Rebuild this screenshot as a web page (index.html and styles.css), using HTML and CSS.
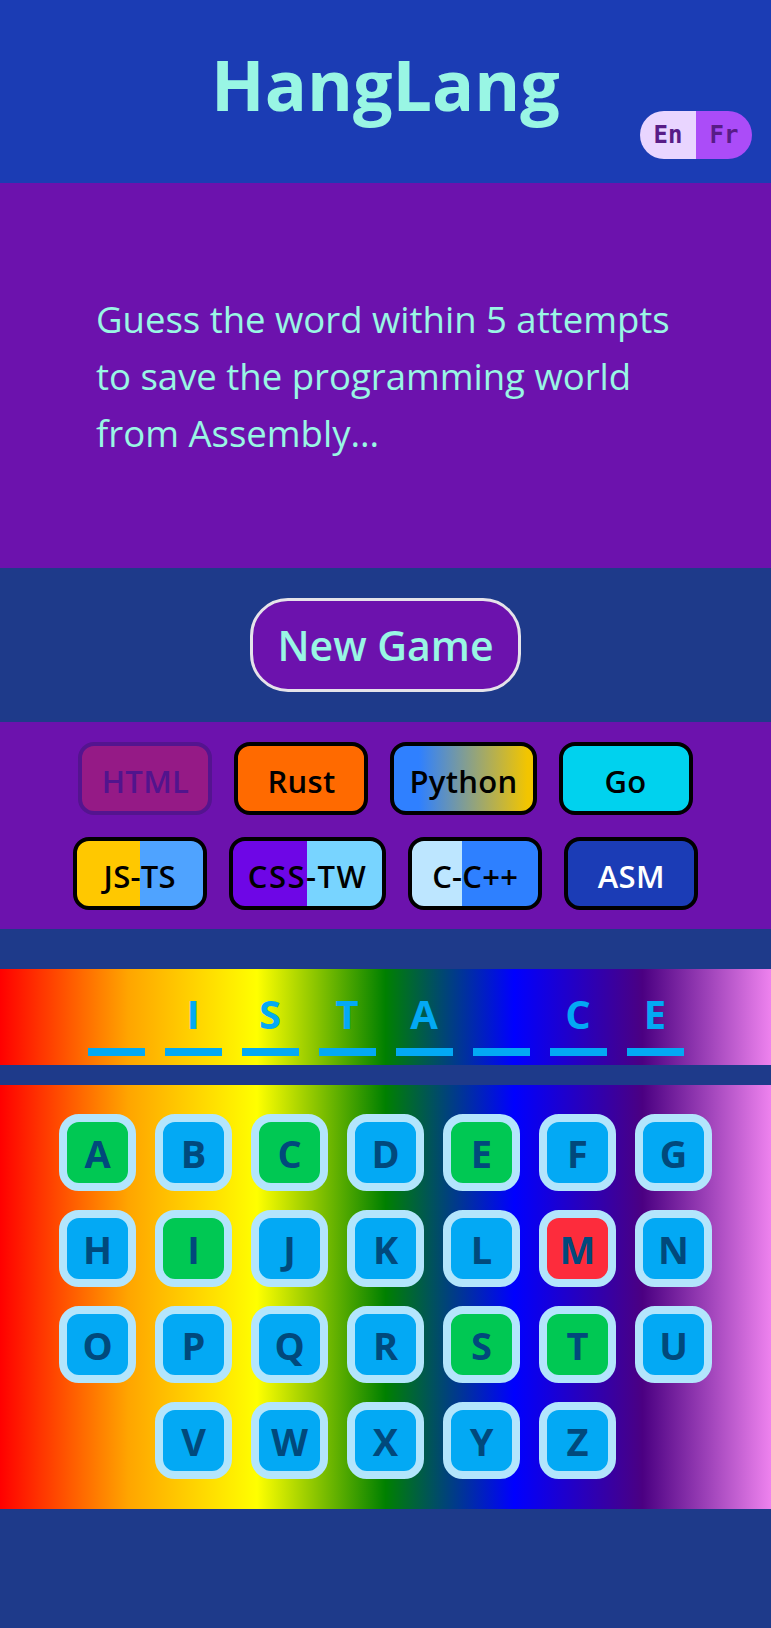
FILE: index.html
```html
<!DOCTYPE html>
<html lang="en">
<head>
<meta charset="utf-8">
<title>HangLang</title>
<link rel="stylesheet" href="styles.css">
</head>
<body>
  <header class="header">
    <h1 class="title">HangLang</h1>
    <div class="lang-toggle">
      <button class="lang-opt lang-en">En</button>
      <button class="lang-opt lang-fr">Fr</button>
    </div>
  </header>

  <section class="intro">
    <p class="intro-text">Guess the word within 5 attempts to save the programming world from Assembly...</p>
  </section>

  <section class="actions">
    <button class="new-game">New Game</button>
  </section>

  <section class="languages">
    <div class="lang-list">
      <button class="lang-btn html">HTML</button>
      <button class="lang-btn rust">Rust</button>
      <button class="lang-btn python">Python</button>
      <button class="lang-btn go">Go</button>
      <button class="lang-btn jsts">JS-TS</button>
      <button class="lang-btn csstw">CSS-TW</button>
      <button class="lang-btn ccpp">C-C++</button>
      <button class="lang-btn asm">ASM</button>
    </div>
  </section>

  <section class="word">
    <div class="slot"><span class="slot-letter"></span><span class="slot-line"></span></div>
    <div class="slot"><span class="slot-letter">I</span><span class="slot-line"></span></div>
    <div class="slot"><span class="slot-letter">S</span><span class="slot-line"></span></div>
    <div class="slot"><span class="slot-letter">T</span><span class="slot-line"></span></div>
    <div class="slot"><span class="slot-letter">A</span><span class="slot-line"></span></div>
    <div class="slot"><span class="slot-letter"></span><span class="slot-line"></span></div>
    <div class="slot"><span class="slot-letter">C</span><span class="slot-line"></span></div>
    <div class="slot"><span class="slot-letter">E</span><span class="slot-line"></span></div>
  </section>

  <section class="keyboard">
    <div class="keys">
      <button class="key hit">A</button>
      <button class="key">B</button>
      <button class="key hit">C</button>
      <button class="key">D</button>
      <button class="key hit">E</button>
      <button class="key">F</button>
      <button class="key">G</button>
      <button class="key">H</button>
      <button class="key hit">I</button>
      <button class="key">J</button>
      <button class="key">K</button>
      <button class="key">L</button>
      <button class="key miss">M</button>
      <button class="key">N</button>
      <button class="key">O</button>
      <button class="key">P</button>
      <button class="key">Q</button>
      <button class="key">R</button>
      <button class="key hit">S</button>
      <button class="key hit">T</button>
      <button class="key">U</button>
      <button class="key">V</button>
      <button class="key">W</button>
      <button class="key">X</button>
      <button class="key">Y</button>
      <button class="key">Z</button>
    </div>
  </section>
</body>
</html>
```

FILE: styles.css
```css
* {
  box-sizing: border-box;
}

html, body {
  margin: 0;
  padding: 0;
}

body {
  background: #1e3a8a;
  font-family: "Open Sans", "Noto Sans", sans-serif;
  min-height: 1628px;
}

button {
  font-family: inherit;
  cursor: pointer;
}

/* Header */
.header {
  position: relative;
  height: 183px;
  background: #1b3cb4;
  padding-top: 37px;
  text-align: center;
}

.title {
  margin: 0;
  font-size: 70px;
  font-weight: 700;
  line-height: 1.362;
  color: #99f6e4;
}

.lang-toggle {
  position: absolute;
  top: 111px;
  right: 19px;
  display: flex;
  width: 112px;
  height: 48px;
  border-radius: 24px;
  overflow: hidden;
}

.lang-opt {
  flex: 1;
  border: 0;
  margin: 0;
  padding: 0;
  font-family: "DejaVu Sans Mono", monospace;
  font-weight: 700;
  font-size: 24px;
  color: #581c87;
}

.lang-en {
  background: #e9d5ff;
}

.lang-fr {
  background: #ab4cf8;
}

/* Intro */
.intro {
  height: 385px;
  background: #6c12ad;
  padding: 108px 90px 0 96px;
}

.intro-text {
  margin: 0;
  font-size: 36.5px;
  line-height: 57px;
  color: #99f6e4;
}

/* New game */
.actions {
  display: flex;
  justify-content: center;
  padding: 30px 0;
}

.new-game {
  height: 94px;
  padding: 0 24px;
  border: 3px solid #e5e3ea;
  border-radius: 38px;
  background: #6c12ad;
  color: #99f6e4;
  font-size: 41px;
  font-weight: 600;
}

/* Languages */
.languages {
  background: #6c12ad;
  padding: 20px 0 19px;
}

.lang-list {
  max-width: 660px;
  margin: 0 auto;
  display: flex;
  flex-wrap: wrap;
  justify-content: center;
  gap: 22px;
}

.lang-btn {
  min-width: 134px;
  height: 73px;
  padding: 4px 15px 0;
  border: 4px solid #000;
  border-radius: 16px;
  font-size: 31px;
  font-weight: 600;
  color: #000;
  letter-spacing: 0.3px;
}

.lang-btn.html {
  background: #951a86;
  border-color: #54148f;
  color: #52148d;
}

.lang-btn.rust {
  background: #ff6a00;
}

.lang-btn.python {
  background: linear-gradient(to right, #2f80ff 18%, #f2c500 96%);
}

.lang-btn.go {
  background: #00d2ee;
}

.lang-btn.jsts {
  background: linear-gradient(to right, #ffc800 50%, #4fa3ff 50%);
}

.lang-btn.csstw {
  background: linear-gradient(to right, #6e06e6 50%, #78d4ff 50%);
  letter-spacing: 1.5px;
}

.lang-btn.ccpp {
  background: linear-gradient(to right, #bde6ff 40%, #2e80ff 40%);
}

.lang-btn.asm {
  background: #1b3cb6;
  color: #fff;
}

/* Word */
.word {
  margin-top: 40px;
  height: 96px;
  padding-top: 25px;
  display: flex;
  justify-content: center;
  gap: 20px;
  background: linear-gradient(to right, red, orange, yellow, green, blue, indigo, violet);
}

.slot {
  width: 57px;
  display: flex;
  flex-direction: column;
  align-items: center;
}

.slot-letter {
  height: 40px;
  line-height: 40px;
  font-size: 40px;
  font-weight: 700;
  color: #03a9f4;
}

.slot-line {
  margin-top: 14px;
  width: 100%;
  height: 8px;
  background: #03a9f4;
}

/* Keyboard */
.keyboard {
  margin-top: 20px;
  padding: 29px 0 30px;
  background: linear-gradient(to right, red, orange, yellow, green, blue, indigo, violet);
}

.keys {
  max-width: 660px;
  margin: 0 auto;
  display: flex;
  flex-wrap: wrap;
  justify-content: center;
  gap: 19px;
}

.key {
  width: 77px;
  height: 77px;
  padding: 0;
  border: 8px solid #b3e5fc;
  border-radius: 20px;
  background: #03a9f4;
  color: #01497c;
  font-size: 38px;
  font-weight: 700;
  display: flex;
  align-items: center;
  justify-content: center;
}

.key.hit {
  background: #00c853;
}

.key.miss {
  background: #fd2c3c;
}
```
